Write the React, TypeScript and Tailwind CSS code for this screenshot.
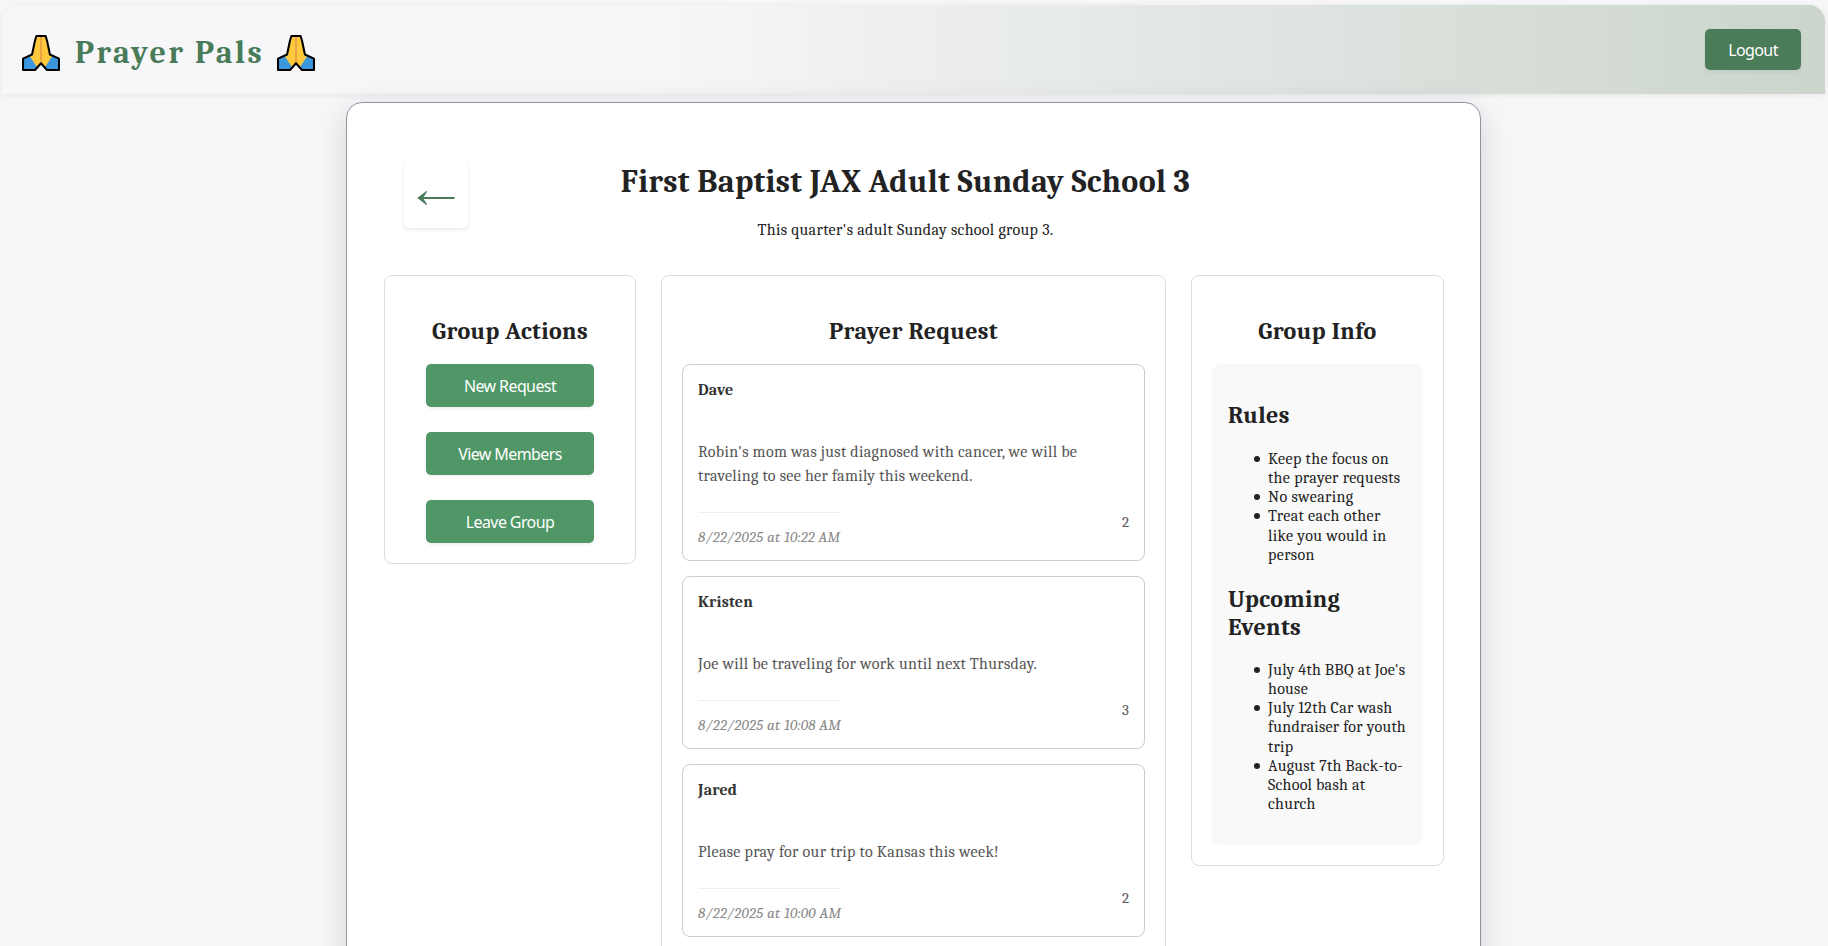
type Request = { name: string; text: string; date: string; count: number };

const requests: Request[] = [
  {
    name: "Dave",
    text: "Robin's mom was just diagnosed with cancer, we will be traveling to see her family this weekend.",
    date: "8/22/2025 at 10:22 AM",
    count: 2,
  },
  { name: "Kristen", text: "Joe will be traveling for work until next Thursday.", date: "8/22/2025 at 10:08 AM", count: 3 },
  { name: "Jared", text: "Please pray for our trip to Kansas this week!", date: "8/22/2025 at 10:00 AM", count: 2 },
];

const rules = ["Keep the focus on the prayer requests", "No swearing", "Treat each other like you would in person"];

const events = [
  "July 4th BBQ at Joe's house",
  "July 12th Car wash fundraiser for youth trip",
  "August 7th Back-to-School bash at church",
];

function PrayingHands() {
  return (
    <svg width="38" height="36" viewBox="0 0 37 35" className="shrink-0" aria-hidden="true">
      <path
        d="M14 1H23L24.5 6L27.2 19L36 23V34H24.3L18.5 27.5L12.7 34H1V23L9.8 19L12.5 6Z"
        fill="#ffc83d"
      />
      <path d="M1 23L7.5 20.4L14.8 31.5L12.7 34H1Z" fill="#3a96dd" />
      <path d="M36 23L29.5 20.4L22.2 31.5L24.3 34H36Z" fill="#3a96dd" />
      <path d="M18.5 2V27" stroke="#e19747" strokeWidth="1.4" />
      <path
        d="M14 1H23L24.5 6L27.2 19L36 23V34H24.3L18.5 27.5L12.7 34H1V23L9.8 19L12.5 6Z"
        fill="none"
        stroke="#000"
        strokeWidth="2"
        strokeLinejoin="round"
      />
    </svg>
  );
}

function Heading({ children, className }: { children: string; className: string }) {
  return <h2 className={`text-2xl leading-7 font-bold tracking-[0.36px] ${className}`}>{children}</h2>;
}

function BulletList({ items, className }: { items: string[]; className: string }) {
  return (
    <ul className={`pl-10 leading-[19.15px] ${className}`}>
      {items.map((item) => (
        <li
          key={item}
          className="relative before:absolute before:top-[6px] before:-left-[14px] before:size-[6px] before:rounded-full before:bg-[#222]"
        >
          {item}
        </li>
      ))}
    </ul>
  );
}

function ActionButton({ children }: { children: string }) {
  return (
    <button className="h-[43px] w-[168px] rounded-[5px] bg-[#4f9767] font-['Noto_Sans',sans-serif] text-base tracking-[-0.6px] text-white shadow-[0_2px_4px_rgba(0,0,0,0.06)]">
      {children}
    </button>
  );
}

function RequestCard({ request }: { request: Request }) {
  return (
    <article className="rounded-lg border border-[#ccc] px-[15px] pt-4 pb-[14px]">
      <h3 className="leading-[19px] font-bold tracking-[0.2px] text-[#333]">{request.name}</h3>
      <p className="mt-10 leading-6 tracking-[0.32px] text-[#555]">{request.text}</p>
      <div className="mt-3 flex items-center justify-between">
        <time className="mt-3 border-t border-[#eee] pt-[15px] text-[15px] leading-[18px] tracking-[0.28px] text-[#888] italic">
          {request.date}
        </time>
        <span className="pb-[2px] text-[15px] leading-[18px] text-[#555]">{request.count}</span>
      </div>
    </article>
  );
}

export default function App() {
  return (
    <div className="h-[946px] overflow-hidden bg-[#f7f7f9] font-[Cambria,Caladea,'Liberation_Serif',serif] text-base text-[#222]">
      <header className="mt-[5px] mr-[3px] ml-[2px] flex h-[89px] items-center justify-between rounded-t-2xl bg-linear-to-r from-[#f7f7f9] from-35% to-[#cbd5cc] pr-6 pl-5 shadow-[0_1px_6px_rgba(0,0,0,0.08)]">
        <div className="flex items-center gap-[15px] pt-4 pb-[10px]">
          <PrayingHands />
          <h1 className="text-[32px] leading-[38px] font-bold tracking-[2.5px] text-[#487b58]">Prayer Pals</h1>
          <span className="-ml-[2px] flex">
            <PrayingHands />
          </span>
        </div>
        <button className="h-[41px] w-24 rounded-[5px] bg-[#4a7c59] font-['Noto_Sans',sans-serif] text-base tracking-[-0.6px] text-white shadow-[0_2px_4px_rgba(0,0,0,0.06)]">
          Logout
        </button>
      </header>

      <main className="mt-2 ml-[346px] h-[1000px] w-[1135px] rounded-2xl border border-[#9494a0] bg-white pr-9 pl-[37px] shadow-[0_8px_32px_rgba(0,0,0,0.15)]">
        <div className="flex h-[172px] pt-[57px] pr-[101px] pl-5">
          <button
            aria-label="Back"
            className="flex h-[68px] w-16 shrink-0 items-center justify-center rounded-[5px] bg-white pt-2 shadow-[0_2px_4px_rgba(0,0,0,0.08)]"
          >
            <svg width="38" height="16" viewBox="0 0 38 16" fill="none" aria-hidden="true">
              <path d="M2 8H37.5" stroke="#4a7c59" strokeWidth="2" />
              <path d="M0.3 8L9.4 1L10.2 1.6L6 8L10.2 14.4L9.4 15Z" fill="#4a7c59" />
            </svg>
          </button>
          <div className="flex-1 text-center">
            <h1 className="mt-[3px] text-[32px] leading-[38px] font-bold tracking-[0.33px]">
              First Baptist JAX Adult Sunday School 3
            </h1>
            <p className="mt-5 leading-[19px] tracking-[0.34px]">This quarter's adult Sunday school group 3.</p>
          </div>
        </div>

        <div className="grid grid-cols-[252px_505px_253px] items-start gap-[25px]">
          <section className="rounded-lg border border-[#ddd] p-5">
            <Heading className="mt-[21px] mb-[19px] text-center">Group Actions</Heading>
            <div className="flex flex-col items-center gap-[25px]">
              <ActionButton>New Request</ActionButton>
              <ActionButton>View Members</ActionButton>
              <ActionButton>Leave Group</ActionButton>
            </div>
          </section>

          <section className="h-[800px] rounded-lg border border-[#ddd] p-5">
            <Heading className="mt-[21px] mb-[19px] text-center">Prayer Request</Heading>
            <div className="flex flex-col gap-[15px]">
              {requests.map((request) => (
                <RequestCard key={request.name} request={request} />
              ))}
            </div>
          </section>

          <section className="rounded-lg border border-[#ddd] p-5">
            <Heading className="mt-[21px] mb-[19px] text-center">Group Info</Heading>
            <div className="flow-root rounded-lg bg-[#f9f9f9] px-4 pt-[17px] pb-[31px]">
              <Heading className="mt-5 mb-[21px]">Rules</Heading>
              <BulletList items={rules} className="tracking-[0.38px]" />
              <Heading className="my-5">Upcoming Events</Heading>
              <BulletList items={events} className="-mr-1 tracking-[0.28px]" />
            </div>
          </section>
        </div>
      </main>
    </div>
  );
}
